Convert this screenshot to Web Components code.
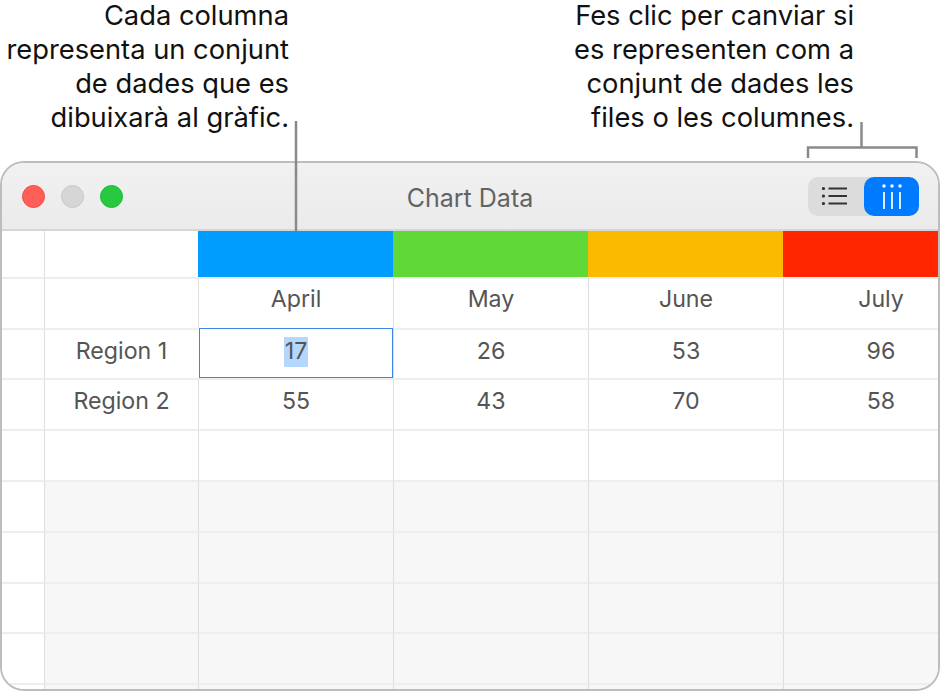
<!DOCTYPE html>
<html lang="ca">
<head>
<meta charset="utf-8">
<title>Chart Data</title>
<style>
  html, body { margin: 0; background: #fff; }
  body {
    width: 943px;
    height: 694px;
    overflow: hidden;
    position: relative;
    font-family: Inter, "Liberation Sans", Arial, sans-serif;
  }
  .notes {
    display: grid;
    grid-template-columns: 289px 565px;
    height: 161px;
  }
</style>
</head>
<body>
  <div class="notes">
    <callout-note>Cada columna<br>representa un conjunt<br>de dades que es<br>dibuixarà al gràfic.</callout-note>
    <callout-note>Fes clic per canviar si<br>es representen com a<br>conjunt de dades les<br>files o les columnes.</callout-note>
  </div>
  <chart-window title="Chart Data">
    <data-grid></data-grid>
  </chart-window>
  <callout-lines></callout-lines>

<script>
class CalloutNote extends HTMLElement {
  constructor() {
    super()
    this.attachShadow({ mode: 'open' })
    this.shadowRoot.innerHTML = `
      <style>
        :host {
          display: block;
          margin-top: -1px;
          text-align: right;
          font-size: 27.300px;
          line-height: 34px;
          color: #111;
          white-space: nowrap;
        }
      </style>
      <slot></slot>
    `
  }
}

// the gray leader lines run over the window, so they sit on top of everything
class CalloutLines extends HTMLElement {
  constructor() {
    super()
    this.attachShadow({ mode: 'open' })
    this.shadowRoot.innerHTML = `
      <style>
        :host {
          position: absolute;
          left: 0;
          top: 0;
          width: 943px;
          height: 694px;
          pointer-events: none;
        }
        svg { display: block; }
      </style>
      <svg width="943" height="694" fill="none" stroke="#8a8a8a" stroke-width="2.500">
        <path d="M296 121V231"/>
        <path d="M861.500 122V147"/>
        <path d="M808 158V147.500H916.500V158"/>
      </svg>
    `
  }
}

class SegmentToggle extends HTMLElement {
  constructor() {
    super()
    this.attachShadow({ mode: 'open' })
    this.shadowRoot.innerHTML = `
      <style>
        :host {
          display: grid;
          grid-template-columns: 56px 55px;
          height: 39px;
          border-radius: 10px;
          background: #dcdcdc;
        }
        div {
          display: flex;
          align-items: center;
          justify-content: center;
          border-radius: 10px;
        }
        .on { background: #007aff; }
        svg { display: block; }
      </style>
      <div>
        <svg width="28" height="22" viewBox="0 0 28 22" fill="#333">
          <circle cx="1.500" cy="3.500" r="1.600"/>
          <circle cx="1.500" cy="11" r="1.600"/>
          <circle cx="1.500" cy="18.500" r="1.600"/>
          <path d="M6.500 2.500H25v2H6.500zM6.500 10H25v2H6.500zM6.500 17.500H25v2H6.500z"/>
        </svg>
      </div>
      <div class="on">
        <svg width="22" height="27" viewBox="0 0 22 27" fill="#fff">
          <circle cx="3" cy="3" r="1.700"/>
          <circle cx="11" cy="3" r="1.700"/>
          <circle cx="19" cy="3" r="1.700"/>
          <path d="M2 9h2v17H2zM10 9h2v17h-2zM18 9h2v17h-2z" fill-opacity=".85"/>
        </svg>
      </div>
    `
  }
}

class TrafficLights extends HTMLElement {
  constructor() {
    super()
    this.attachShadow({ mode: 'open' })
    this.shadowRoot.innerHTML = `
      <style>
        :host {
          display: flex;
          gap: 16px;
        }
        span {
          width: 23px;
          height: 23px;
          border-radius: 50%;
          box-sizing: border-box;
        }
        .close { background: #ff5f57; border: 1px solid #ea4f48; }
        .min { background: #d6d6d6; border: 1px solid #c8c8c8; }
        .max { background: #28c840; border: 1px solid #24b63a; }
      </style>
      <span class="close"></span>
      <span class="min"></span>
      <span class="max"></span>
    `
  }
}

class ChartWindow extends HTMLElement {
  constructor() {
    super()
    this.attachShadow({ mode: 'open' })
    this.shadowRoot.innerHTML = `
      <style>
        :host {
          display: block;
          box-sizing: border-box;
          width: 940px;
          height: 530px;
          border: 2px solid #bdbdbd;
          border-radius: 24px;
          overflow: hidden;
          background: #fff;
        }
        header {
          position: relative;
          box-sizing: border-box;
          height: 68px;
          display: flex;
          align-items: center;
          justify-content: space-between;
          padding: 0 19px 0 20px;
          background: linear-gradient(#f1f1f1, #ebebeb);
          border-bottom: 2px solid #d6d6d6;
        }
        h1 {
          position: absolute;
          left: 0;
          right: 0;
          top: 20px;
          margin: 0;
          text-align: center;
          font: 400 25px/30px Inter, "Liberation Sans", sans-serif;
          color: #636363;
        }
      </style>
      <header>
        <traffic-lights></traffic-lights>
        <h1></h1>
        <segment-toggle></segment-toggle>
      </header>
      <slot></slot>
    `
  }

  connectedCallback() {
    this.shadowRoot.querySelector('h1').textContent = this.getAttribute('title')
  }
}

const SERIES_COLORS = ['#009dff', '#5fd938', '#f9ba00', '#ff2600']
const COLUMNS = ['April', 'May', 'June', 'July']
const ROWS = [
  ['Region 1', 17, 26, 53, 96],
  ['Region 2', 55, 43, 70, 58],
]
// height of each body row, top to bottom
const ROW_HEIGHTS = [51, 50, 51, 51, 51, 51, 50, 51, 7]

class DataGrid extends HTMLElement {
  constructor() {
    super()
    this.attachShadow({ mode: 'open' })
    this.shadowRoot.innerHTML = `
      <style>
        :host {
          display: grid;
          grid-template-columns: 42px 154px 195px 195px 195px 195px;
          grid-template-rows: 46px ${ROW_HEIGHTS.map(h => h + 'px').join(' ')};
          overflow: hidden;
          font: 400 23.200px/1 Inter, "Liberation Sans", sans-serif;
          color: #555;
        }
        div {
          box-sizing: border-box;
          min-width: 0;
          display: flex;
          align-items: center;
          justify-content: center;
          border-left: 1px solid #dedede;
          border-top: 2px solid #eeeeee;
          padding-bottom: 6px;
        }
        .swatch { border: 0; padding: 0; }
        .band { border-top: 0; }
        .head { padding-bottom: 8px; }
        .first { padding-bottom: 4px; }
        .empty { background: #f7f7f7; }
        .gutter { background: #fff; border-left: 0; }
        .selected {
          border: 0;
          box-shadow: inset 0 0 0 1px #3a87e6;
          margin-left: 1px;
          padding-bottom: 2px;
        }
        mark {
          background: #b4d7fd;
          color: inherit;
          padding: 3px 1px;
        }
      </style>
    `
    this._render()
  }

  _add(className, text) {
    const cell = document.createElement('div')
    cell.className = className
    if (text !== undefined) {
      cell.textContent = text
    }
    this.shadowRoot.appendChild(cell)
    return cell
  }

  _render() {
    // color band
    this._add('gutter band')
    this._add('band')
    SERIES_COLORS.forEach(color => {
      this._add('swatch').style.background = color
    })

    ROW_HEIGHTS.forEach((height, i) => {
      const isHead = i === 0
      const row = ROWS[i - 1]
      const shaded = i > 3
      const rowClass = shaded ? 'empty' : (isHead ? 'head' : (i === 1 ? 'first' : ''))
      this._add('gutter')
      this._add(rowClass, row ? row[0] : undefined)
      for (let c = 0; c < 4; c++) {
        const text = isHead ? COLUMNS[c] : (row ? row[c + 1] : undefined)
        const cell = this._add(rowClass, text)
        if (i === 1 && c === 0) {
          cell.className = 'selected'
          cell.textContent = ''
          const mark = document.createElement('mark')
          mark.textContent = text
          cell.appendChild(mark)
        }
      }
    })
  }
}

customElements.define('callout-note', CalloutNote)
customElements.define('callout-lines', CalloutLines)
customElements.define('segment-toggle', SegmentToggle)
customElements.define('traffic-lights', TrafficLights)
customElements.define('chart-window', ChartWindow)
customElements.define('data-grid', DataGrid)
</script>
</body>
</html>
